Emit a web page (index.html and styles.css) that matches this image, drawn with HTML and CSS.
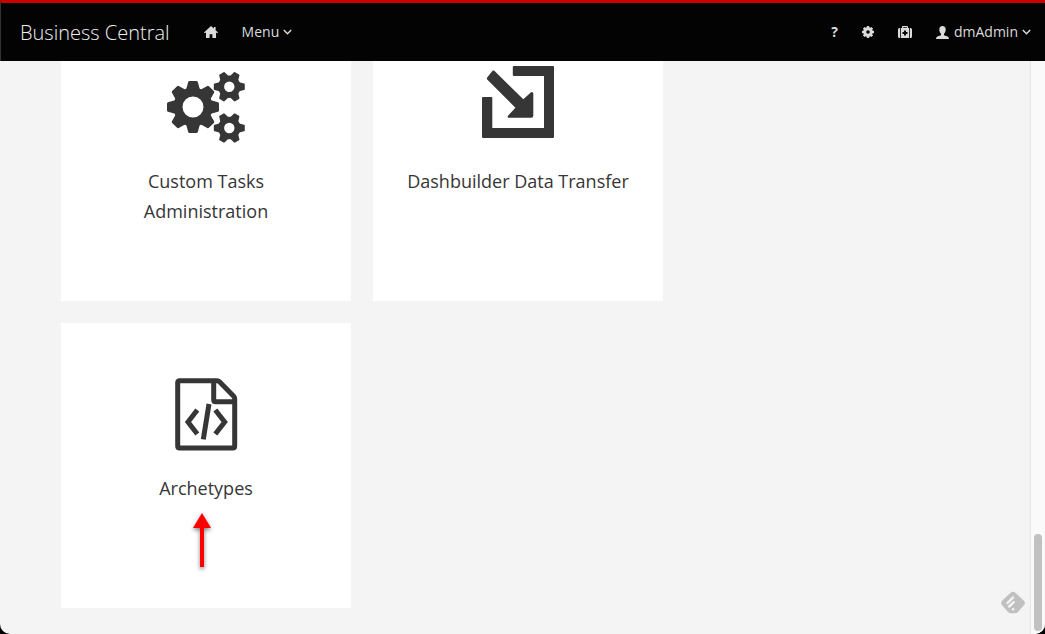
FILE: index.html
```html
<!DOCTYPE html>
<html lang="en">
<head>
<meta charset="utf-8">
<title>Business Central</title>
<link rel="stylesheet" href="styles.css">
</head>
<body>
<div class="window">
  <header class="navbar">
    <a class="brand" href="#">Business Central</a>
    <nav class="nav-main">
      <a class="nav-item" href="#" aria-label="Home">
        <svg class="icon-home" viewBox="0 0 14 12"><path d="M7 0 0 6.400l.8.900L2 6.500V12h3.600V8.200h2.800V12H12V6.500l1.200.8.800-.9-2.400-2.200V1H9.800v1.500z"/></svg>
      </a>
      <button class="nav-item" type="button">Menu
        <svg class="chevron" viewBox="0 0 9 6"><path d="M.8 1l3.700 3.700L8.200 1"/></svg>
      </button>
    </nav>
    <div class="nav-tools">
      <button class="nav-item help" type="button" aria-label="Help">?</button>
      <button class="nav-item" type="button" aria-label="Settings">
        <svg class="icon-cog" viewBox="-6 -6 12 12"><g id="cog-a"><path d="M-1.600-3.500-1.100-6h2.200l.5 2.500zM-1.600 3.500-1.100 6h2.200l.5-2.500z"/><path d="M-1.600-3.500-1.100-6h2.200l.5 2.500zM-1.600 3.500-1.100 6h2.200l.5-2.500z" transform="rotate(45)"/></g><use href="#cog-a" transform="rotate(90)"/><circle class="cog-ring" r="3.300"/></svg>
      </button>
      <button class="nav-item" type="button" aria-label="Administration">
        <svg class="icon-kit" viewBox="0 0 14 12"><path fill-rule="evenodd" d="M4 2V.8Q4 0 4.800 0h4.400Q10 0 10 .8V2h1v10H3V2zM5.200 2h3.600v-.8H5.200zM6 4.500V6H4.500v2H6v1.500h2V8h1.500V6H8V4.500zM2.200 2v10H1.500Q0 12 0 10.500v-7Q0 2 1.500 2zM11.800 2v10h.7q1.500 0 1.500-1.500v-7Q14 2 12.500 2z"/></svg>
      </button>
      <button class="nav-item user" type="button">
        <svg class="icon-user" viewBox="0 0 13 13"><path d="M6.500 0C8.600 0 9.700 1.400 9.700 3.600c0 1.900-.7 3.400-1.700 4.200v1.400l3.600 1.300Q13 11 13 13H0q0-2 1.400-2.500L5 9.200V7.800C4 7 3.300 5.500 3.300 3.600 3.300 1.400 4.400 0 6.500 0z"/></svg>
        dmAdmin
        <svg class="chevron" viewBox="0 0 9 6"><path d="M.8 1l3.700 3.700L8.200 1"/></svg>
      </button>
    </div>
  </header>

  <div class="viewport">
    <main class="content">
      <div class="cards">
        <a class="card" href="#">
          <svg class="card-icon" viewBox="0 0 80 80">
            <defs>
              <path id="tooth8" d="M-7-17-4.800-25Q-4.500-26-3.500-26h7q1 0 1.300 1L7-17z"/>
              <path id="tooth6" d="M-4.800-9-3.200-14.700Q-3-15.500-2.200-15.500h4.400q.8 0 1 .8L4.800-9z"/>
              <g id="small-gear">
                <circle class="gear-ring-small" r="8.200"/>
                <use href="#tooth6" transform="rotate(30)"/><use href="#tooth6" transform="rotate(90)"/><use href="#tooth6" transform="rotate(150)"/>
                <use href="#tooth6" transform="rotate(210)"/><use href="#tooth6" transform="rotate(270)"/><use href="#tooth6" transform="rotate(330)"/>
              </g>
            </defs>
            <g transform="translate(27 41)">
              <circle class="gear-ring" r="15"/>
              <use href="#tooth8"/><use href="#tooth8" transform="rotate(45)"/><use href="#tooth8" transform="rotate(90)"/><use href="#tooth8" transform="rotate(135)"/>
              <use href="#tooth8" transform="rotate(180)"/><use href="#tooth8" transform="rotate(225)"/><use href="#tooth8" transform="rotate(270)"/><use href="#tooth8" transform="rotate(315)"/>
            </g>
            <use href="#small-gear" transform="translate(63.300 20.700)"/>
            <use href="#small-gear" transform="translate(63.300 62)"/>
          </svg>
          <span class="card-title">Custom Tasks Administration</span>
        </a>
        <a class="card" href="#">
          <svg class="card-icon" viewBox="0 0 80 80">
            <path d="M36 0h39q1 0 1 1v70q0 1-1 1H5q-1 0-1-1V32q0-1 1-1h8.300q1 0 1 1v30H66V10H36q-1.200 0-1.200-1V1Q34.800 0 36 0z"/>
            <path d="M16.300 4.800q-1-.6-1.800 0L9.200 11.500q-.8 1 0 1.900l28.200 28.300-7.600 8.300q-.6 1.700 1 1.700h22.500q2 0 2-2V27.500q-.4-2.200-2.200-1.200l-7.800 7z"/>
          </svg>
          <span class="card-title">Dashbuilder Data Transfer</span>
        </a>
        <a class="card" href="#">
          <svg class="card-icon" viewBox="0 0 80 80">
            <g class="file-lines">
              <path d="M13.700 7.700H51q1.500 0 2.500 1l14.200 14.500q1 1 1 2.500V73q0 2-2 2h-53q-2 0-2-2V9.700q0-2 2-2z"/>
              <path d="M47.700 7.700v19q0 2 2 2h19"/>
              <path class="code-lines" d="M31.300 37 22 49l9.300 12M49.300 37l9.400 12-9.400 12M43 31l-5.700 35.300"/>
            </g>
          </svg>
          <span class="card-title">Archetypes</span>
          <svg class="pointer" viewBox="0 0 30 64"><path d="M15 3l9 15h-7v39h-4V18H6z"/></svg>
        </a>
      </div>
      <button class="feedback" type="button" aria-label="Feedback">
        <svg class="icon-feedback" viewBox="0 0 24 24">
          <path class="badge" d="M9.600 1.700q2.400-2 4.800 0l8.500 8q2 2.300 0 4.600l-6.400 7.200q-1 .8-2.300.8H9.800q-1.300 0-2.300-.8L1.100 14.300q-2-2.300 0-4.600z"/>
          <path class="marks" d="M6.500 12l5.500-5.500M8.200 15.500l4.600-4.300M12 18.300h.2"/>
        </svg>
      </button>
    </main>
    <div class="scroll-track"><div class="scroll-thumb"></div></div>
  </div>
</div>
</body>
</html>
```
FILE: styles.css
```css
* {
  box-sizing: border-box;
}

body {
  margin: 0;
  background: #000;
  font-family: "Open Sans", "Noto Sans", sans-serif;
  color: #363636;
}

.window {
  display: flex;
  flex-direction: column;
  height: 100vh;
  overflow: hidden;
  border-radius: 0 0 10px 10px;
  background: #f4f4f4;
}

.navbar {
  display: flex;
  align-items: center;
  flex: none;
  height: 61px;
  padding: 0 14px 0 19px;
  border-top: 3px solid #c00;
  border-left: 1px solid #333;
  background: #030303;
}

.brand {
  margin-right: 34px;
  color: #f0f0f0;
  font-size: 20px;
  font-weight: 300;
  text-decoration: none;
}

.nav-main {
  display: flex;
  align-items: center;
  gap: 24px;
}

.nav-tools {
  display: flex;
  align-items: center;
  gap: 24px;
  margin-left: auto;
}

.nav-item {
  display: flex;
  align-items: center;
  gap: 4px;
  padding: 0;
  border: 0;
  background: none;
  color: #dbdbdb;
  font-family: inherit;
  font-size: 14px;
  line-height: 20px;
}

.nav-item svg {
  fill: #dbdbdb;
}

.help {
  font-weight: 700;
}

.icon-home,
.icon-kit {
  width: 14px;
  height: 12px;
}

.icon-cog {
  width: 12px;
  height: 12px;
}

.cog-ring {
  fill: none;
  stroke: #dbdbdb;
  stroke-width: 3;
}

.icon-user {
  width: 13px;
  height: 13px;
  margin-right: 1px;
}

.nav-item .chevron {
  width: 9px;
  height: 6px;
  fill: none;
  stroke: #dbdbdb;
  stroke-width: 1.5;
}

.viewport {
  display: flex;
  flex: 1;
  min-height: 0;
}

.content {
  position: relative;
  display: flex;
  flex: 1;
  flex-direction: column;
  justify-content: flex-end;
  overflow: hidden;
  padding: 0 61px 26px;
}

.cards {
  display: grid;
  grid-template-columns: repeat(2, 290px);
  gap: 22px;
}

.card {
  position: relative;
  display: flex;
  flex-direction: column;
  align-items: center;
  gap: 20px;
  min-height: 285px;
  padding: 50px 30px 0;
  background: #fff;
  color: #363636;
  font-size: 18px;
  line-height: 30px;
  text-align: center;
  text-decoration: none;
}

.card-icon {
  width: 80px;
  height: 80px;
  fill: #363636;
}

.card-title {
  max-width: 230px;
}

.gear-ring {
  fill: none;
  stroke: #363636;
  stroke-width: 9;
}

.gear-ring-small {
  fill: none;
  stroke: #363636;
  stroke-width: 6;
}

.file-lines {
  fill: none;
  stroke: #363636;
  stroke-width: 5;
}

.pointer {
  position: absolute;
  top: 187px;
  left: 126px;
  width: 30px;
  height: 64px;
  fill: #f00;
  filter: drop-shadow(0 2px 2px rgba(0, 0, 0, 0.5));
}

.feedback {
  position: absolute;
  right: 5px;
  bottom: 19px;
  padding: 0;
  border: 0;
  background: none;
}

.icon-feedback {
  display: block;
  width: 24px;
  height: 24px;
}

.badge {
  fill: #c0c0c0;
}

.marks {
  fill: none;
  stroke: #f4f4f4;
  stroke-width: 2.4;
  stroke-linecap: round;
}

.scroll-track {
  display: flex;
  align-items: flex-end;
  justify-content: center;
  width: 15px;
  padding-bottom: 3px;
  border-left: 1px solid #e6e6e6;
  background: #fafafa;
}

.scroll-thumb {
  width: 8px;
  height: 97px;
  border-radius: 4px;
  background: #c1c1c1;
}
```
